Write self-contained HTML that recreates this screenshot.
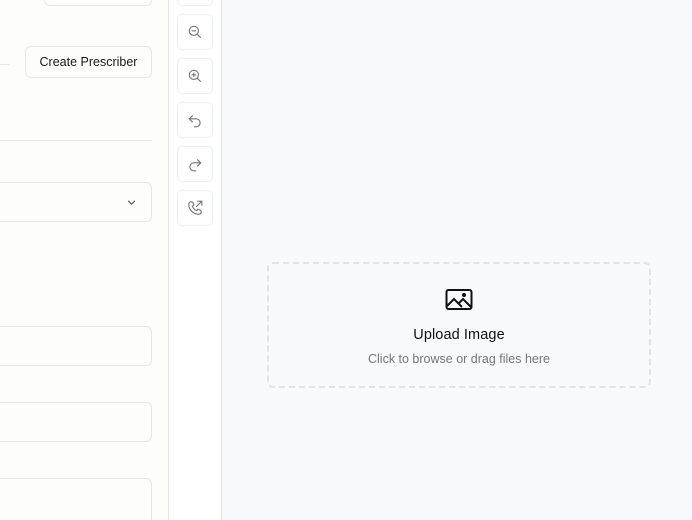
<!DOCTYPE html>
<html style="overflow:hidden;width:692px;height:520px"><head><style>
body{margin:0;width:692px;height:520px;overflow:hidden;position:relative;font-family:"Liberation Sans",sans-serif;background:#f7f9fc}
.left{position:absolute;left:0;top:0;width:168px;height:520px;background:#fdfdfc;border-right:1px solid #e4e6eb;overflow:hidden}
.tool{position:absolute;left:169px;top:0;width:52px;height:520px;background:#fff;border-right:1px solid #e4e6eb}
.box{position:absolute;border:1px solid #e5e6ea;border-radius:6px;background:#fdfdfc;box-sizing:border-box}
.tb{position:absolute;left:8px;width:36px;height:36px;border:1px solid #eceef1;border-radius:5px;box-sizing:border-box;display:flex;align-items:center;justify-content:center;background:#fff}
svg{display:block}
</style></head><body>
<div class="left">
<div class="box" style="left:44px;top:-30px;width:108px;height:36px"></div>
<div style="position:absolute;left:0;top:64px;width:9px;height:1px;background:#e5e6ea"></div>
<div class="box" style="left:25px;top:46px;width:127px;height:32px;display:flex;align-items:center;justify-content:center;font-size:12.5px;color:#1a1a1a">Create Prescriber</div>
<div style="position:absolute;left:0;top:140px;width:152px;height:1px;background:#e5e6ea"></div>
<div class="box" style="left:-10px;top:182px;width:162px;height:40px"><svg style="position:absolute;right:14px;top:14px" width="11" height="11" viewBox="0 0 10 10"><path d="M2 3.5l3 3 3-3" fill="none" stroke="#666" stroke-width="1.2"/></svg></div>
<div class="box" style="left:-10px;top:326px;width:162px;height:40px"></div>
<div class="box" style="left:-10px;top:402px;width:162px;height:40px"></div>
<div class="box" style="left:-10px;top:478px;width:162px;height:60px"></div>
</div>
<div class="tool">
<div class="tb" style="top:-30px"></div>
<div class="tb" style="top:14px"><svg width="16" height="16" viewBox="0 0 14 14" fill="none" stroke="#777" stroke-width="1"><circle cx="6" cy="6" r="4"/><path d="M9 9l3 3M4 6h4"/></svg></div>
<div class="tb" style="top:58px"><svg width="16" height="16" viewBox="0 0 14 14" fill="none" stroke="#777" stroke-width="1"><circle cx="6" cy="6" r="4"/><path d="M9 9l3 3M4 6h4M6 4v4"/></svg></div>
<div class="tb" style="top:102px"><svg width="16" height="16" viewBox="0 0 14 14" fill="none" stroke="#777" stroke-width="1"><path d="M5 3L2 6l3 3M2 6h6a3.5 3.5 0 0 1 0 7H6"/></svg></div>
<div class="tb" style="top:146px"><svg width="16" height="16" viewBox="0 0 14 14" fill="none" stroke="#777" stroke-width="1"><path d="M9 3l3 3-3 3M12 6H6a3.5 3.5 0 0 0 0 7h2"/></svg></div>
<div class="tb" style="top:190px"><svg width="16" height="16" viewBox="0 0 14 14" fill="none" stroke="#777" stroke-width="1"><path d="M3 1.5l2 .5 1 2.5-1.3 1a7 7 0 0 0 3.8 3.8l1-1.3 2.5 1 .5 2c-.5 1-1.5 1.5-2.5 1.5A9 9 0 0 1 1.5 4C1.5 3 2 2 3 1.5zM8 6l5-5M9 1h4v4"/></svg></div>
</div>
<div style="position:absolute;left:267px;top:262px;width:384px;height:126px;border:2px dashed #dfe2e6;border-radius:6px;box-sizing:border-box;text-align:center">
<svg style="margin:24px auto 0" width="28" height="24" viewBox="0 0 28 24" fill="none" stroke="#111" stroke-width="2"><rect x="1.5" y="2" width="25" height="19" rx="2"/><path d="M2 18l7-7 8 8M14 15l4-4 8 8"/><circle cx="19" cy="7" r="1" fill="#111"/></svg>
<div style="font-size:14.5px;color:#111;margin-top:15px;letter-spacing:0.1px">Upload Image</div>
<div style="font-size:12.5px;color:#777;margin-top:9px">Click to browse or drag files here</div>
</div>
</body></html>
